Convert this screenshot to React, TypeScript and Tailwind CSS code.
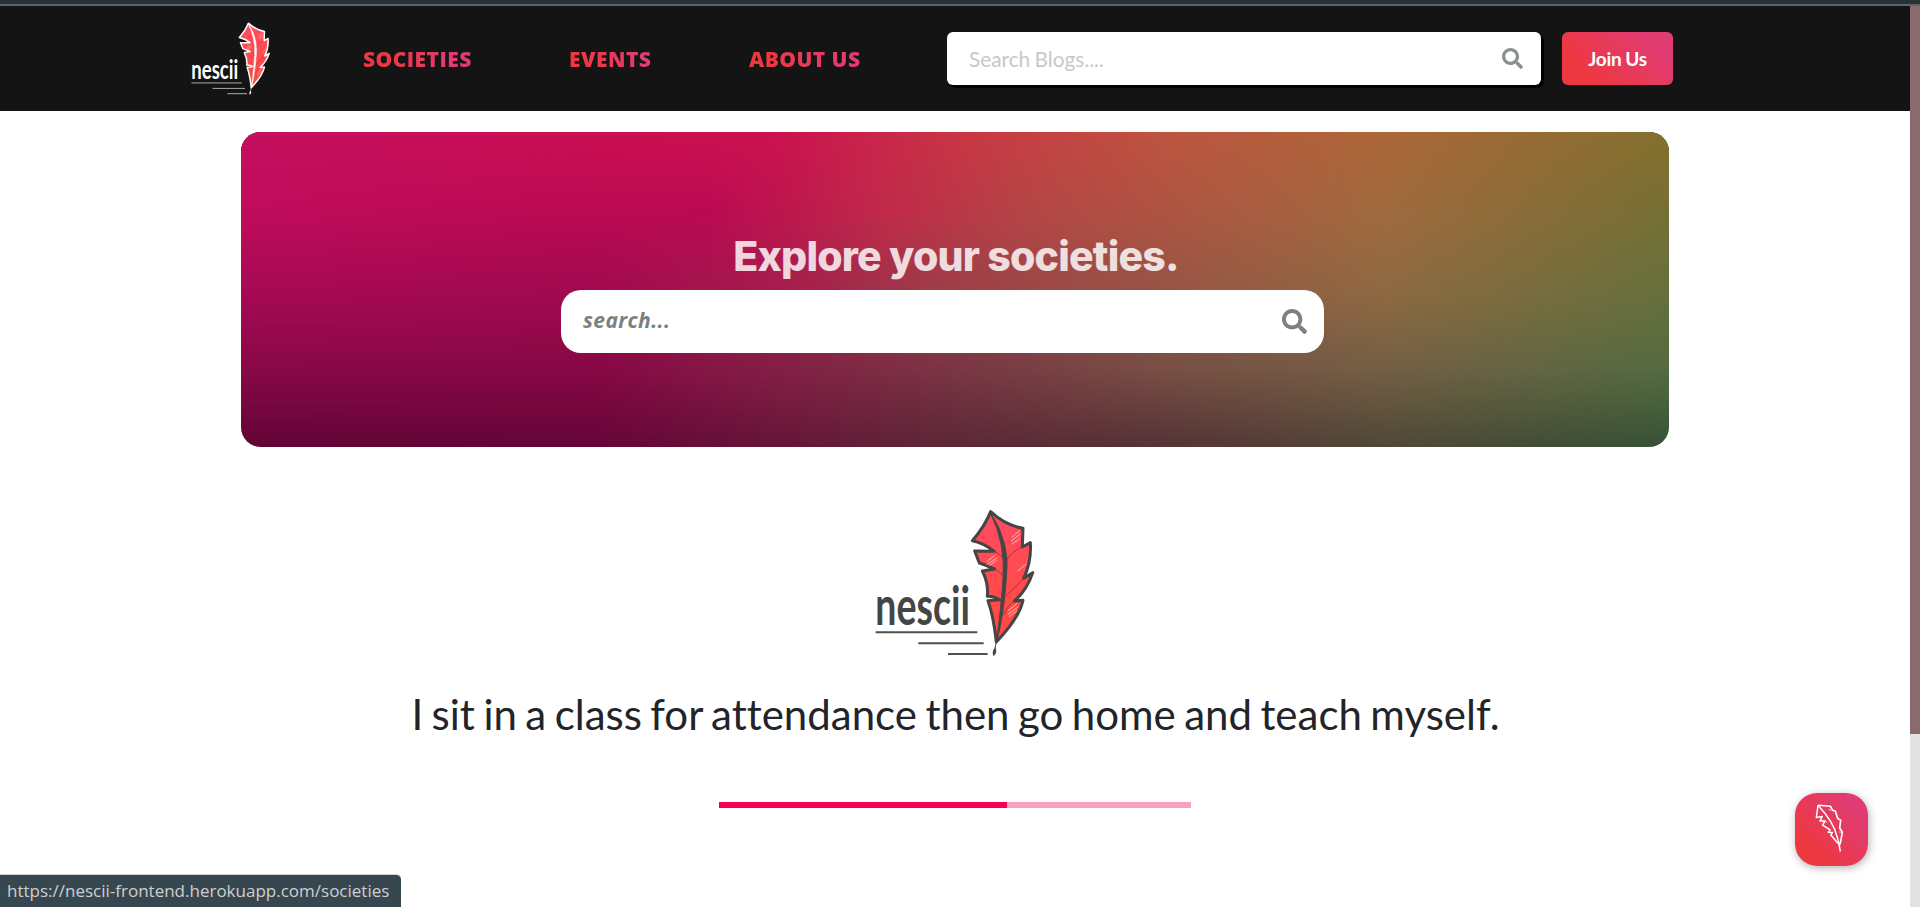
import { FaSearch } from "react-icons/fa";

function NesciiLogo({ ink, line, className }: { ink: string; line: string; className: string }) {
  return (
    <svg viewBox="76 58 477 442" className={className + " overflow-visible"} aria-label="nescii">
      <defs>
        <linearGradient id="feather" x1="0" y1="0" x2="0" y2="1">
          <stop offset="0" stopColor="#ff4c62" />
          <stop offset="1" stopColor="#ff4a3c" />
        </linearGradient>
      </defs>
      <path
        d="M423 65 Q465 105 520 115 L518 171 L542 158 Q546 215 522 265 L549 248 Q532 300 494 333 L520 331 Q508 385 440 456 Q432 380 415 332 L450 329 Q432 318 413 319 Q417 280 398 243 L435 237 Q405 224 389 219 L375 183 L434 184 Q405 160 368 152 Q405 110 423 65Z"
        fill="url(#feather)"
        stroke={ink}
        strokeWidth="9"
        strokeLinejoin="round"
      />
      <path d="M421 66 Q484 160 470 265 Q462 380 440 458 Q455 350 460 265 Q468 160 421 66Z" fill={ink} stroke={ink} strokeWidth="3" />
      <path d="M470 212 Q485 184 518 171 M468 318 Q500 290 522 265 M435 237 Q455 246 463 264 M434 184 Q454 192 464 210 M463 375 Q470 350 494 333 M450 329 L459 345" fill="none" stroke="#9c2f3a" strokeWidth="2.5" />
      <path d="M487 141 L510 122 M484 153 L512 132 M487 162 L510 146 M411 215 L436 196 M411 224 L443 203 M419 227 L441 211 M504 243 L531 221 M476 362 L502 340 M474 374 L506 350 M479 380 L502 362" stroke="#ffb3bd" strokeWidth="3" />
      <path d="M440 456 L436 474" stroke={ink} strokeWidth="3" />
      <path d="M437 471 Q445 486 432 499 Q424 487 437 471Z" fill={ink} />
      <text x="77" y="406" textLength="284" lengthAdjust="spacingAndGlyphs" fill={ink} fontFamily="Lato, sans-serif" fontWeight="700" fontSize="160">
        nescii
      </text>
      <path d="M78 427 H383 M206 460 H402 M295 492 H414" stroke={line} strokeWidth="6" />
    </svg>
  );
}

function QuillOutline() {
  return (
    <svg viewBox="284 308 88 152" className="h-[50px] w-[29px]" fill="none" stroke="#fff" strokeLinejoin="round">
      <path strokeWidth="5" d="M293 315 L331 318 L337 330 L346 333 L353 355 L362 360 L359 384 L367 397 L362 425 L358 437" />
      <path strokeWidth="4.5" d="M293 315 L288 352 L306 349 L299 363 L314 363 L307 375 L330 390 L324 397 L337 398 L332 405 L354 431" />
      <path strokeWidth="4.5" d="M293 315 Q340 365 351 410 Q357 428 361 456" />
      <path strokeWidth="3" d="M325 327 L333 330 M357 396 L365 398 M314 360 L320 368" stroke="#ffc0c8" />
    </svg>
  );
}

const navItem =
  "bg-[linear-gradient(60deg,#ee3840_20%,#e13c72_80%)] bg-clip-text text-transparent font-extrabold text-[21px] leading-[28px] tracking-[0.45px] whitespace-nowrap font-['Open_Sans',sans-serif]";

export default function App() {
  return (
    <div className="flex h-[907px] w-full flex-col overflow-hidden bg-white font-[Lato,sans-serif]">
      <div className="h-[6px] shrink-0 border-b-2 border-[#5c6566] bg-[#263238]" />
      <div className="flex min-h-0 flex-1">
        <div className="relative flex min-w-0 flex-1 flex-col">
          <header className="flex h-[105px] shrink-0 items-center bg-[#141414] pl-[191px]">
            <NesciiLogo ink="#ffffff" line="#a9afb0" className="h-[73px] w-[79px]" />
            <nav className="flex items-center pl-[93px]">
              <a className={navItem + " w-[110px]"}>SOCIETIES</a>
              <a className={navItem + " ml-[96px] w-[84px]"}>EVENTS</a>
              <a className={navItem + " ml-[96px] w-[114px]"}>ABOUT US</a>
            </nav>
            <div className="ml-[84px] flex h-[53px] w-[594px] items-center justify-between rounded-[6px] bg-white pr-[18px] pl-[22px] shadow-[3px_3px_0_#000]">
              <span className="text-[20.8px] text-[#c8c8c8] [word-spacing:-1px]">Search Blogs....</span>
              <FaSearch className="size-[21px] text-[#8c8f8f]" />
            </div>
            <button className="ml-[21px] flex h-[53px] w-[111px] items-center justify-center rounded-[6px] bg-[linear-gradient(45deg,#ee3840_20%,#e13c72_80%)] pt-[2px] text-[19px] font-bold tracking-[-0.3px] text-white [word-spacing:-0.5px]">
              Join Us
            </button>
          </header>

          <section className="relative mt-[21px] ml-[241px] flex h-[315px] w-[1428px] shrink-0 flex-col overflow-hidden rounded-[20px]">
            <div className="absolute inset-0 bg-[linear-gradient(90deg,#620536_0%,#650538_25%,#651638_38%,#5c2836_50%,#553336_65%,#504838_80%,#375237_100%)]" />
            <div className="absolute inset-0 bg-[linear-gradient(90deg,#8a0848_0%,#880845_25%,#842045_38%,#7a3644_50%,#785045_65%,#745f44_80%,#546c40_100%)] mask-[linear-gradient(180deg,#000_75%,transparent_100%)]" />
            <div className="absolute inset-0 bg-[linear-gradient(90deg,#a80a55_0%,#a20a50_25%,#a51e4c_38%,#9e4048_50%,#985545_65%,#8f6a42_80%,#66703c_100%)] mask-[linear-gradient(180deg,#000_50%,transparent_75%)]" />
            <div className="absolute inset-0 bg-[linear-gradient(90deg,#c00c5c_0%,#bc0a54_20%,#bb0a52_33%,#c02a4a_45%,#b54545_55%,#ad5842_67%,#a06a3e_80%,#767034_100%)] mask-[linear-gradient(180deg,#000_25%,transparent_50%)]" />
            <div className="absolute inset-0 bg-[linear-gradient(90deg,#c41060_0%,#cb0f52_25%,#cb1350_38%,#c93545_50%,#bd5540_65%,#ac6638_80%,#84702e_100%)] mask-[linear-gradient(180deg,#000_0%,transparent_25%)]" />
            <div className="relative flex flex-col pt-[98px]">
              <h1 className="pl-[2px] text-center font-[Inter,sans-serif] text-[41px] leading-[52px] font-extrabold tracking-[-0.8px] text-white/82">
                Explore your societies.
              </h1>
              <div className="mt-[8px] ml-[320px] flex h-[63px] w-[763px] items-center justify-between rounded-[20px] bg-white pr-[17px] pl-[22px]">
                <span className="pb-[1px] font-['Open_Sans',sans-serif] text-[21px] font-bold tracking-[0.4px] text-[#7d8080] italic">search...</span>
                <FaSearch className="size-[25px] text-[#7d8080]" />
              </div>
            </div>
          </section>

          <main className="flex flex-col items-center pt-[62px]">
            <NesciiLogo ink="#454545" line="#505050" className="mr-[2px] h-[148px] w-[159px]" />
            <p className="mt-[31px] pl-[1px] text-[42px] leading-[52px] whitespace-nowrap text-[#212529] [font-variant-ligatures:none] [word-spacing:-2.3px]">
              I sit in a class for attendance then go home and teach myself.
            </p>
            <div className="mt-[62px] flex h-[6px] w-[472px] bg-[#fba0bc]">
              <div className="w-[288px] bg-[#f50057]" />
            </div>
          </main>

          <button className="absolute right-[42px] bottom-[41px] flex size-[73px] justify-center rounded-[22px] bg-[linear-gradient(45deg,#ee3840_20%,#e13c72_80%)] pt-[10px] pr-[4px] shadow-[1px_2px_9px_rgba(0,0,0,0.3)]">
            <QuillOutline />
          </button>
          <div className="absolute bottom-0 left-0 flex h-[33px] w-[401px] items-center rounded-tr-[5px] border-t border-[#cdd3d4] bg-[#37474f] pl-[7px] font-['Open_Sans',sans-serif] text-[17px] whitespace-nowrap text-[#cfcfcf]">
            https://nescii-frontend.herokuapp.com/societies
          </div>
        </div>
        <div className="flex w-[10px] shrink-0 bg-[#e2e2e2]">
          <div className="h-[728px] w-full bg-[#8a6b6d]" />
        </div>
      </div>
    </div>
  );
}
